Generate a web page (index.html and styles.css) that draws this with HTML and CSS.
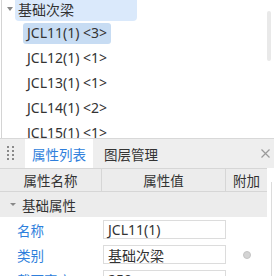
FILE: index.html
```html
<!DOCTYPE html>
<html lang="zh-CN">
<head>
  <meta charset="UTF-8">
  <title>基础次梁</title>
  <link rel="stylesheet" href="styles.css">
</head>
<body>

  <div class="tree-panel">
    <div class="tree-group">
      <span class="caret"></span>
      <span class="group-label">基础次梁</span>
    </div>
    <ul class="tree-list">
      <li><span class="node selected">JCL11(1) &lt;3&gt;</span></li>
      <li><span class="node">JCL12(1) &lt;1&gt;</span></li>
      <li><span class="node">JCL13(1) &lt;1&gt;</span></li>
      <li><span class="node">JCL14(1) &lt;2&gt;</span></li>
      <li><span class="node">JCL15(1) &lt;1&gt;</span></li>
    </ul>
    <div class="scroll-thumb"></div>
  </div>

  <div class="prop-panel">
    <div class="tab-bar">
      <svg class="grip" width="8" height="16" viewBox="0 0 8 16">
        <rect x="0" y="0" width="2" height="2" /><rect x="5" y="0" width="2" height="2" />
        <rect x="0" y="4" width="2" height="2" /><rect x="5" y="4" width="2" height="2" />
        <rect x="0" y="8" width="2" height="2" /><rect x="5" y="8" width="2" height="2" />
        <rect x="0" y="12" width="2" height="2" /><rect x="5" y="12" width="2" height="2" />
      </svg>
      <div class="tab active">属性列表</div>
      <div class="tab">图层管理</div>
      <svg class="close" width="9" height="9" viewBox="0 0 9 9">
        <path d="M0.5 0.5 L8.5 8.5 M8.5 0.5 L0.5 8.5" />
      </svg>
    </div>

    <div class="prop-body">
      <div class="prop-table">
        <div class="row head">
          <div class="cell name">属性名称</div>
          <div class="cell value">属性值</div>
          <div class="cell extra">附加</div>
        </div>
        <div class="row section">
          <span class="caret small"></span>
          <span>基础属性</span>
        </div>
        <div class="row item">
          <div class="cell name link">名称</div>
          <div class="cell value"><div class="field">JCL11(1)</div></div>
          <div class="cell extra"></div>
        </div>
        <div class="row item">
          <div class="cell name link">类别</div>
          <div class="cell value"><div class="field">基础次梁</div></div>
          <div class="cell extra"><span class="dot"></span></div>
        </div>
        <div class="row item">
          <div class="cell name link">截面宽度</div>
          <div class="cell value"><div class="field">250</div></div>
          <div class="cell extra"></div>
        </div>
      </div>
      <div class="scroll-track"></div>
    </div>
  </div>

</body>
</html>
```

FILE: styles.css
```css
body {
  margin: 0;
  width: 274px;
  height: 276px;
  overflow: hidden;
  background-color: #fff;
  color: #333;
  font-family: "Noto Sans", "Noto Sans CJK SC", sans-serif;
  font-size: 14px;
}

/* tree */

.tree-panel {
  position: relative;
  height: 138px;
  margin-left: 1px;
  border-left: 1px solid #d4d4d4;
  overflow: hidden;
}

.tree-group {
  display: flex;
  align-items: center;
  height: 25px;
  margin-top: -4px;
  padding-left: 5px;
}

.caret {
  width: 0;
  height: 0;
  border-left: 3px solid transparent;
  border-right: 3px solid transparent;
  border-top: 4px solid #888;
  margin-right: 2px;
}

.group-label {
  display: flex;
  align-items: center;
  height: 25px;
  width: 119px;
  padding-left: 3px;
  background-color: #dae9fb;
  border-radius: 4px;
}

.tree-list {
  list-style: none;
  margin: 0;
  padding: 0 0 0 21px;
}

.tree-list li {
  height: 25px;
  display: flex;
  align-items: center;
}

.node {
  padding: 1px 4px 2px 4px;
  line-height: 18px;
  border-radius: 3px;
}

.node.selected {
  background-color: #c7dcf3;
}

.scroll-thumb {
  position: absolute;
  top: 11px;
  right: 3px;
  width: 4px;
  height: 50px;
  border-radius: 2px;
  background-color: #e9e9e9;
}

/* property panel */

.prop-panel {
  border-top: 1px solid #d8d8d8;
}

.tab-bar {
  display: flex;
  align-items: stretch;
  height: 29px;
  background-color: #eeeeee;
}

.grip {
  fill: #8a8a8a;
  margin: 7px 10px 0 7px;
}

.tab {
  display: flex;
  align-items: center;
  padding: 0 6px;
  margin-right: 3px;
  font-size: 13.5px;
}

.tab.active {
  background-color: #fff;
  color: #2f7fdc;
  width: 56px;
  justify-content: center;
  margin-right: 5px;
}

.close {
  margin: 10px 4px 0 auto;
  stroke: #9a9a9a;
  stroke-width: 1.2;
}

.prop-body {
  display: flex;
}

.prop-table {
  width: 267px;
}

.row {
  display: flex;
  height: 25px;
  align-items: center;
  box-sizing: border-box;
}

.cell {
  height: 100%;
  display: flex;
  align-items: center;
  box-sizing: border-box;
}

.cell.name {
  width: 102px;
  padding-left: 17px;
}

.cell.value {
  width: 124px;
}

.cell.extra {
  width: 41px;
  justify-content: center;
}

.row.head {
  height: 24px;
  background-color: #ececec;
  border-top: 1px solid #d6d6d6;
  border-bottom: 1px solid #d6d6d6;
}

.row.head .cell {
  font-size: 13.5px;
}

.row.head .cell.name {
  justify-content: center;
  padding-left: 0;
  border-right: 1px solid #d6d6d6;
}

.row.head .cell.value {
  justify-content: center;
  border-right: 1px solid #d6d6d6;
}

.row.section {
  background-color: #ececec;
  padding-left: 10px;
  font-size: 13.5px;
}

.caret.small {
  border-top-width: 3px;
  margin-right: 6px;
}

.link {
  color: #2f7fdc;
  font-size: 13.5px;
  white-space: nowrap;
}

.field {
  width: 123px;
  height: 19px;
  box-sizing: border-box;
  border: 1px solid #dcdcdc;
  display: flex;
  align-items: center;
  padding-left: 4px;
  margin-left: 1px;
}

.dot {
  width: 8px;
  height: 8px;
  border-radius: 50%;
  background-color: #d4d4d4;
  border: 1px solid #c4c4c4;
  box-sizing: border-box;
}

.scroll-track {
  margin-top: 14px;
  margin-left: 4px;
  border-left: 1px solid #dcdcdc;
  flex: 1;
}
```
